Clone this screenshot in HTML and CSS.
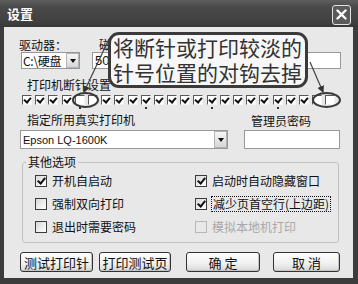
FILE: index.html
```html
<!DOCTYPE html>
<html lang="zh-CN">
<head>
    <meta charset="UTF-8">
    <title>设置</title>
    <link rel="stylesheet" href="styles.css">
</head>
<body>
<div class="window">
    <div class="titlebar">
        <span class="title">设置</span>
        <span class="close-btn">
            <svg width="11" height="11" viewBox="0 0 11 11"><path d="M1.5 1.5 L9.5 9.5 M9.5 1.5 L1.5 9.5" stroke="#fff" stroke-width="2.4" stroke-linecap="round"/></svg>
        </span>
    </div>
    <div class="frame">
        <div class="dialog">
            <div class="row-top">
                <div class="field field-drive">
                    <span class="label">驱动器：</span>
                    <div class="combo combo-drive"><span class="combo-text">C:\硬盘</span><span class="combo-btn"></span></div>
                </div>
                <div class="field field-pins">
                    <span class="label">磁头</span>
                    <div class="edit edit-pins">50</div>
                </div>
                <div class="field field-copies">
                    <span class="label">&nbsp;</span>
                    <div class="edit edit-copies"></div>
                </div>
            </div>

            <div class="pinset">
                <div class="label">打印机断针设置</div>
                <div class="pins">
                    <span class="pin on"></span><span class="pin on"></span><span class="pin on"></span><span class="pin on"></span>
                    <span class="pin"></span><span class="pin"></span>
                    <span class="pin on"></span><span class="pin on"></span><span class="pin on"></span><span class="pin on"></span>
                    <span class="pin on"></span><span class="pin on"></span><span class="pin on"></span><span class="pin on"></span>
                    <span class="pin on"></span><span class="pin on"></span><span class="pin on"></span><span class="pin on"></span>
                    <span class="pin on"></span><span class="pin on"></span><span class="pin on"></span><span class="pin on"></span>
                    <span class="pin"></span><span class="pin"></span>
                </div>
                <div class="pins ticks">
                    <span class="tick"></span><span class="tick"></span><span class="tick"></span><span class="tick"></span>
                    <span class="tick m"></span><span class="tick"></span><span class="tick"></span><span class="tick"></span>
                    <span class="tick"></span><span class="tick m"></span><span class="tick"></span><span class="tick"></span>
                    <span class="tick"></span><span class="tick"></span><span class="tick m"></span><span class="tick"></span>
                    <span class="tick"></span><span class="tick"></span><span class="tick"></span><span class="tick m"></span>
                </div>
            </div>

            <div class="row-printer">
                <div class="col-printer">
                    <div class="label">指定所用真实打印机</div>
                    <div class="combo combo-printer"><span class="combo-text latin">Epson LQ-1600K</span><span class="combo-btn"></span></div>
                </div>
                <div class="col-password">
                    <div class="label">管理员密码</div>
                    <div class="edit edit-password"></div>
                </div>
            </div>

            <fieldset class="group">
                <legend>其他选项</legend>
                <div class="options">
                    <div class="option"><span class="cb on"></span><span>开机自启动</span></div>
                    <div class="option"><span class="cb on"></span><span>启动时自动隐藏窗口</span></div>
                    <div class="option"><span class="cb"></span><span>强制双向打印</span></div>
                    <div class="option"><span class="cb on"></span><span class="focus">减少页首空行(上边距)</span></div>
                    <div class="option"><span class="cb"></span><span>退出时需要密码</span></div>
                    <div class="option disabled"><span class="cb"></span><span>模拟本地机打印</span></div>
                </div>
            </fieldset>

            <div class="buttons">
                <span class="btn btn-test">测试打印针</span>
                <span class="btn btn-page">打印测试页</span>
                <span class="btn btn-ok">确 定</span>
                <span class="btn btn-cancel">取 消</span>
            </div>

            <!-- annotation drawn over the dialog -->
            <svg class="annot" width="349" height="251" viewBox="0 0 349 251">
                <defs>
                    <marker id="arrow" markerWidth="6" markerHeight="6" refX="5" refY="3" orient="auto">
                        <path d="M0 0 L6 3 L0 6 Z" fill="#333"/>
                    </marker>
                </defs>
                <line x1="104" y1="14" x2="80" y2="65" stroke="#444" stroke-width="1.2" marker-end="url(#arrow)"/>
                <line x1="306" y1="35" x2="319" y2="65" stroke="#444" stroke-width="1.2" marker-end="url(#arrow)"/>
                <ellipse cx="81.5" cy="73" rx="12.5" ry="7" fill="none" stroke="#3a3a3a" stroke-width="2"/>
                <ellipse cx="322.5" cy="73" rx="13.5" ry="7" fill="none" stroke="#3a3a3a" stroke-width="2"/>
            </svg>
            <div class="callout">将断针或打印较淡的<br>针号位置的对钩去掉</div>
        </div>
    </div>
</div>
</body>
</html>
```

FILE: styles.css
```css
* {
    box-sizing: border-box;
}
body {
    margin: 0;
    font-family: "Noto Sans CJK SC", "Noto Sans", sans-serif;
    font-size: 12px;
    color: #111;
    background: #fff;
}
.window {
    width: 358px;
    height: 284px;
    display: flex;
    flex-direction: column;
    background: #3c3c3c;
}
.titlebar {
    height: 27px;
    display: flex;
    align-items: center;
    padding-left: 7px;
    background: linear-gradient(#5e5e5e, #4a4a4a 25%, #404040 80%, #383838);
}
.title {
    color: #fff;
    font-weight: bold;
    font-size: 13px;
    line-height: 27px;
}
.close-btn {
    margin-left: auto;
    margin-right: 7px;
    margin-top: 2px;
    width: 19px;
    height: 20px;
    border: 1px solid #e4e4e4;
    border-radius: 3px;
    background: #5a5a5a;
    display: flex;
    align-items: center;
    justify-content: center;
}
.frame {
    flex: 1;
    padding: 0 5px 6px 4px;
    display: flex;
}
.dialog {
    flex: 1;
    position: relative;
    background: #e8e8e8;
    padding: 11px 0 0 16px;
}
.label {
    display: block;
    line-height: 14px;
    white-space: nowrap;
}

/* top row */
.row-top {
    display: flex;
}
.field {
    display: flex;
    flex-direction: column;
}
.field-drive .label {
    margin-left: -1px;
}
.field-drive .combo {
    margin-left: 1px;
}
.field-pins {
    margin-left: 12px;
}
.field-pins .label {
    margin-left: 7px;
}
.field-copies {
    margin-left: auto;
    margin-right: 12px;
}
.combo,
.edit {
    height: 17px;
    border: 1px solid #989898;
    background: #fff;
    display: flex;
    align-items: center;
}
.combo-drive {
    width: 59px;
}
.combo-text {
    flex: 1;
    padding-left: 1px;
    line-height: 14px;
    white-space: nowrap;
}
.combo-drive .combo-text {
    letter-spacing: -0.3px;
}
.latin {
    font-family: "Liberation Sans", Arial, sans-serif;
    font-size: 11px;
    padding-left: 2px;
}
.combo-btn {
    flex: none;
    width: 13px;
    height: 100%;
    border: 1px solid #b4b4b4;
    background: linear-gradient(#f6f6f6, #d6d6d6);
    display: flex;
    align-items: center;
    justify-content: center;
}
.combo-btn::before {
    content: "";
    border-left: 3.5px solid transparent;
    border-right: 3.5px solid transparent;
    border-top: 4px solid #111;
}
.edit {
    padding-left: 2px;
    font-family: "Liberation Sans", Arial, sans-serif;
    font-size: 13px;
}
.edit-pins {
    width: 40px;
}
.edit-copies {
    width: 90px;
}

/* pin checkboxes */
.pinset {
    margin-top: 9px;
}
.pinset .label {
    margin-left: 7px;
}
.pins {
    display: flex;
    gap: 3.2px;
    margin-left: 2px;
    margin-top: 3px;
}
.pin {
    position: relative;
    width: 10px;
    height: 10px;
    background: #fff;
    border: 1px solid;
    border-color: #5a5a5a #f4f4f4 #f4f4f4 #5a5a5a;
}
.pin.on::after {
    content: "";
    position: absolute;
    left: 2px;
    top: 0;
    width: 3px;
    height: 5px;
    border: solid #111;
    border-width: 0 2px 2px 0;
    transform: rotate(40deg);
}
.ticks {
    margin-top: 1px;
    height: 4px;
}
.tick {
    width: 10px;
    height: 4px;
}
.tick.m {
    background: linear-gradient(#333, #333) center / 2px 2px no-repeat;
}

/* printer row */
.row-printer {
    display: flex;
    margin-top: 3px;
}
.col-printer {
    width: 208px;
}
.col-printer .label {
    margin-left: 7px;
}
.col-password {
    width: 96px;
    margin-left: 16px;
}
.col-password .label {
    margin-left: 7px;
    padding-top: 1px;
    margin-bottom: -1px;
}
.combo-printer,
.edit-password {
    height: 19px;
    margin-top: 3px;
}

/* group box */
.group {
    margin: 6px 0 0 2px;
    width: 317px;
    padding: 0 0 4px 0;
    border: 1px solid #c2c2c2;
    border-radius: 3px;
}
.group legend {
    margin-left: 3px;
    padding: 0 2px;
    line-height: 14px;
}
.options {
    display: grid;
    grid-template-columns: 160px 1fr;
    grid-auto-rows: 23px;
    padding-left: 12px;
}
.option {
    display: flex;
    align-items: center;
    white-space: nowrap;
}
.cb {
    position: relative;
    width: 12px;
    height: 12px;
    margin-right: 5px;
    border: 1px solid #3c3c3c;
    background: linear-gradient(135deg, #d8d8d8, #fff);
}
.cb.on::after {
    content: "";
    position: absolute;
    left: 3px;
    top: 0;
    width: 3px;
    height: 6px;
    border: solid #111;
    border-width: 0 2px 2px 0;
    transform: rotate(40deg);
}
.focus {
    outline: 1px dotted #111;
    line-height: 14px;
    padding: 0 1px;
}
.disabled {
    color: #a8a8a8;
}
.disabled .cb {
    border-color: #b8b8b8;
    background: #e8e8e8;
}

/* buttons */
.buttons {
    display: flex;
    margin-top: 9px;
}
.btn {
    height: 20px;
    border: 1px solid #333;
    border-radius: 3px;
    background: linear-gradient(#fdfdfd, #f0f0f0 60%, #d6d6d6);
    box-shadow: inset -1px -1px 0 #c4c4c4;
    font-size: 13px;
    display: flex;
    align-items: center;
    justify-content: center;
    white-space: pre;
}
.btn-test {
    width: 73px;
}
.btn-page {
    width: 72px;
    margin-left: 6px;
}
.btn-ok {
    width: 74px;
    margin-left: 15px;
}
.btn-cancel {
    width: 67px;
    margin-left: 13px;
}

/* annotation */
.annot {
    position: absolute;
    left: 0;
    top: 0;
    pointer-events: none;
}
.callout {
    position: absolute;
    left: 104px;
    top: 5px;
    width: 200px;
    height: 56px;
    border: 3px solid #3a3a3a;
    border-radius: 11px;
    background: #f7f7f7;
    padding: 0 2px;
    font-size: 21px;
    line-height: 25px;
    color: #333;
    white-space: nowrap;
}
```
